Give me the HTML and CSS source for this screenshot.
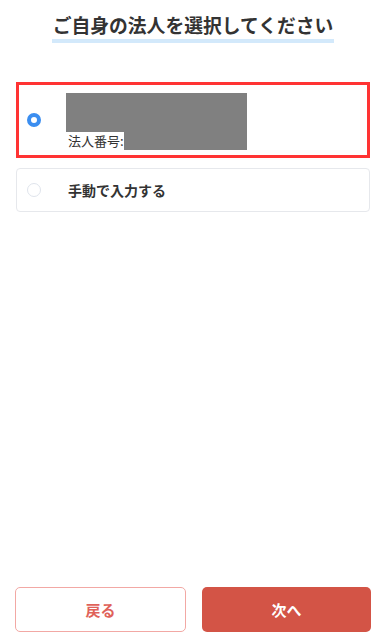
FILE: index.html
```html
<!DOCTYPE html>
<html lang="ja">
<head>
<meta charset="utf-8">
<link rel="stylesheet" href="styles.css">
</head>
<body>
<div class="page">
  <header class="head">
    <h1 class="title">ご自身の法人を選択してください</h1>
  </header>
  <div class="options">
    <div class="card card-selected">
      <span class="radio radio-on"></span>
      <div class="info">
        <div class="mask mask-name"></div>
        <div class="numrow"><span class="numlabel">法人番号:</span><span class="mask mask-num"></span></div>
      </div>
    </div>
    <div class="card card-plain">
      <span class="radio radio-off"></span>
      <span class="manual">手動で入力する</span>
    </div>
  </div>
  <div class="spacer"></div>
  <div class="actions">
    <button class="btn btn-back">戻る</button>
    <button class="btn btn-next">次へ</button>
  </div>
</div>
</body>
</html>
```
FILE: styles.css
```css
* { box-sizing: border-box; }
html, body { margin: 0; padding: 0; background: #fff; }
body {
  font-family: "Noto Sans CJK JP", "Noto Sans", sans-serif;
  color: #333;
}
.page {
  width: 386px;
  height: 640px;
  display: flex;
  flex-direction: column;
}
.head {
  display: flex;
  justify-content: center;
  padding-top: 12px;
}
.title {
  margin: 0;
  font-size: 18.8px;
  line-height: 26px;
  font-weight: 700;
  color: #333;
  padding: 0 1px 1px;
  border-bottom: 4px solid #d3e9fb;
}
.options {
  padding: 39px 16px 0;
  display: flex;
  flex-direction: column;
  gap: 10px;
}
.card {
  display: flex;
  align-items: center;
  background: #fff;
}
.card-selected {
  height: 76px;
  border: 3px solid #ff3333;
  padding-left: 8px;
}
.card-plain {
  height: 44px;
  border: 1px solid #e6e8ec;
  border-radius: 4px;
  padding-left: 10px;
}
.radio {
  width: 14px;
  height: 14px;
  border-radius: 50%;
  flex: none;
}
.radio-on {
  border: 4px solid #3b8ef0;
  background: #fff;
}
.radio-off {
  border: 1px solid #dfe4ec;
}
.info {
  margin-left: 25px;
  display: flex;
  flex-direction: column;
  padding-top: 3px;
}
.mask { background: #808080; display: block; }
.mask-name { width: 181px; height: 39px; }
.numrow { display: flex; align-items: stretch; height: 18px; }
.numlabel {
  font-size: 13px;
  line-height: 18px;
  color: #333;
  padding-left: 2px;
  width: 58px;
}
.mask-num { width: 123px; height: 18px; }
.manual {
  margin-left: 27px;
  font-size: 14px;
  font-weight: 700;
  color: #333;
}
.spacer { flex: 1; }
.actions {
  display: flex;
  gap: 16px;
  padding: 0 15px 8px;
}
.btn {
  flex: 1;
  height: 45px;
  border-radius: 5px;
  font-family: "Noto Sans CJK JP", "Noto Sans", sans-serif;
  font-size: 15px;
  font-weight: 700;
  cursor: pointer;
}
.btn-back {
  background: #fff;
  border: 1.5px solid #f2a8a4;
  color: #e0625a;
}
.btn-next {
  background: #d35446;
  border: none;
  color: #fff;
}
```
